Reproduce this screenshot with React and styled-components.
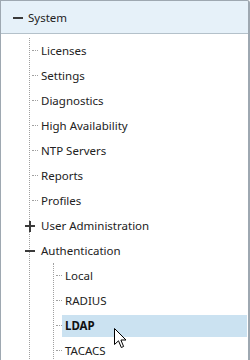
import React from "react";
import styled, { createGlobalStyle } from "styled-components";

const GlobalStyle = createGlobalStyle`
  html, body {
    margin: 0;
    padding: 0;
    background: #ffffff;
    overflow: hidden;
  }
  body {
    font-family: "Noto Sans", "Open Sans", sans-serif;
  }
`;

const Panel = styled.div`
  width: 247px;
  height: 359px;
  border: 1px solid #9ea8b1;
  border-bottom: none;
  border-right-width: 2px;
  border-radius: 0 3px 0 0;
  background: #fff;
  position: relative;
  overflow: hidden;
`;

const Header = styled.div`
  height: 32px;
  display: flex;
  align-items: center;
  padding-left: 11px;
  background: #e6f1f9;
  border-bottom: 1px solid #b4c1ca;
  font-size: 11.5px;
  color: #222;
`;

const Toggle = styled.span`
  position: relative;
  flex: none;
  width: 11px;
  height: 11px;
  margin-left: ${p => p.$offset || 0}px;
  &::before,
  &::after {
    content: "";
    position: absolute;
    background: #3a3a3a;
  }
  &::before {
    left: 1px;
    right: 0;
    top: 5px;
    height: 2px;
  }
  &::after {
    display: ${p => (p.$open ? "none" : "block")};
    top: 1px;
    bottom: -1px;
    left: 5px;
    width: 2px;
  }
`;

const HeaderLabel = styled.span`
  margin-left: 5px;
`;

const Tree = styled.div`
  padding-top: 4px;
`;

const Branch = styled.div`
  margin-left: ${p => p.$indent}px;
  border-left: 1px dotted #a0a0a0;
`;

const Row = styled.div`
  height: 25px;
  display: flex;
  align-items: center;
  font-size: 11.5px;
  color: #222;
`;

const Connector = styled.span`
  flex: none;
  width: 6px;
  margin-left: 2px;
  border-top: 1px dotted #a0a0a0;
`;

const Label = styled.span`
  flex: 1;
  height: 22px;
  display: flex;
  align-items: center;
  padding-left: ${p => (p.$toggle ? 6 : 3)}px;
  margin-right: 1px;
  background: ${p => (p.$selected ? "#cbe2f1" : "transparent")};
  font-weight: ${p => (p.$selected ? 700 : 400)};
  color: ${p => (p.$selected ? "#111" : "#222")};
`;

const Cursor = styled.svg`
  position: absolute;
  left: 113px;
  top: 327px;
  pointer-events: none;
`;

function Leaf({ label, selected }) {
  return (
    <Row>
      <Connector />
      <Label $selected={selected}>{label}</Label>
    </Row>
  );
}

function Folder({ label, open }) {
  return (
    <Row>
      <Toggle $open={open} $offset={-6} />
      <Label $toggle>{label}</Label>
    </Row>
  );
}

export default function App() {
  return (
    <>
      <GlobalStyle />
      <Panel>
        <Header>
          <Toggle $open />
          <HeaderLabel>System</HeaderLabel>
        </Header>
        <Tree>
          <Branch $indent={28}>
            <Leaf label="Licenses" />
            <Leaf label="Settings" />
            <Leaf label="Diagnostics" />
            <Leaf label="High Availability" />
            <Leaf label="NTP Servers" />
            <Leaf label="Reports" />
            <Leaf label="Profiles" />
            <Folder label="User Administration" />
            <Folder label="Authentication" open />
            <Branch $indent={23}>
              <Leaf label="Local" />
              <Leaf label="RADIUS" />
              <Leaf label="LDAP" selected />
              <Leaf label="TACACS" />
            </Branch>
          </Branch>
        </Tree>
        <Cursor width="13" height="21" viewBox="0 0 13 21">
          <path
            d="M0.5 0.5 L0.5 16.5 L4.5 12.8 L7.3 19.5 L9.6 18.5 L6.9 12 L12 12 Z"
            fill="#fff"
            stroke="#000"
            strokeWidth="1"
            strokeLinejoin="miter"
          />
        </Cursor>
      </Panel>
    </>
  );
}
